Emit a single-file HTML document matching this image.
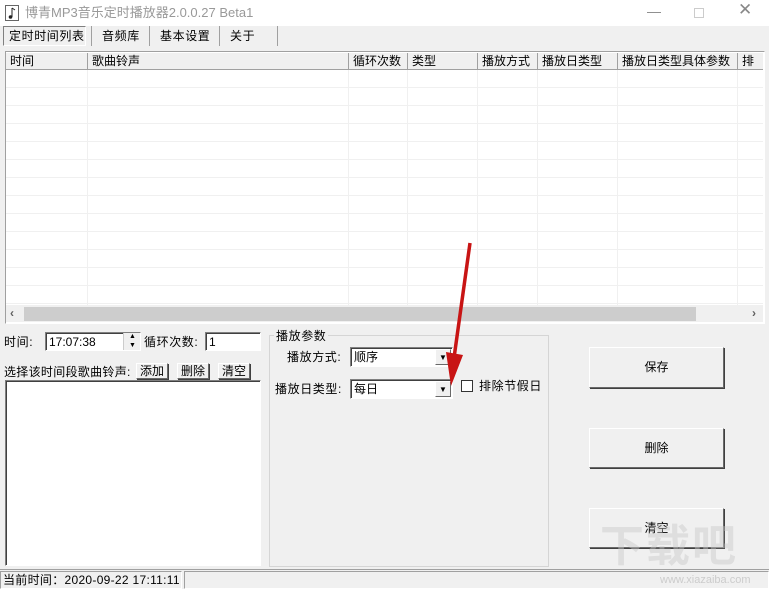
<!DOCTYPE html>
<html><head><meta charset="utf-8"><style>
*{margin:0;padding:0;box-sizing:border-box}
body{width:769px;height:589px;background:#f0f0f0;position:relative;overflow:hidden;font:12px "Liberation Sans","Noto Sans CJK SC",sans-serif;color:#000}
.a{position:absolute}
.t{position:absolute;white-space:nowrap;line-height:14px}
.btn{position:absolute;background:#f0f0f0;border:1px solid;border-color:#fff #696969 #696969 #fff;box-shadow:1px 1px 0 #404040;text-align:center}
.in{position:absolute;background:#fff;border:1px solid;border-color:#808080 #fff #fff #808080;box-shadow:inset 1px 1px 0 #404040}
.hd{position:absolute;top:53px;height:17px;border-right:1px solid #a0a0a0;border-bottom:1px solid #a0a0a0;background:#f0f0f0;padding-left:4px;line-height:16px}
.l{font-size:12px;letter-spacing:0.6px}
</style></head><body>
<div class="a" style="left:0;top:0;width:769px;height:26px;background:#fff"></div>
<svg class="a" style="left:5px;top:5px" width="14" height="16"><rect x="0.5" y="0.5" width="13" height="15" fill="#fff" stroke="#666"/><path d="M7 3v9M7 3l3 2" stroke="#222" fill="none"/><circle cx="5.5" cy="12" r="1.8" fill="#222"/></svg>
<div class="t" style="left:25px;top:6px;color:#999;font-size:13px">博青MP3音乐定时播放器2.0.0.27 Beta1</div>
<div class="t" style="left:647px;top:4px;color:#888;font-size:14px">—</div>
<div class="a" style="left:694px;top:8px;width:10px;height:10px;border:1px solid #ccc"></div>
<div class="t" style="left:738px;top:3px;color:#888;font-size:17px">✕</div>
<!-- tabs -->
<div class="a" style="left:3px;top:26px;width:83px;height:20px;border:1px solid;border-color:#808080 #fff #fff #808080"></div>
<div class="t l" style="left:9px;top:29px">定时时间列表</div>
<div class="a" style="left:91px;top:26px;width:1px;height:20px;background:#a0a0a0"></div>
<div class="t l" style="left:102px;top:29px">音频库</div>
<div class="a" style="left:149px;top:26px;width:1px;height:20px;background:#a0a0a0"></div>
<div class="t l" style="left:160px;top:29px">基本设置</div>
<div class="a" style="left:219px;top:26px;width:1px;height:20px;background:#a0a0a0"></div>
<div class="t l" style="left:230px;top:29px">关于</div>
<div class="a" style="left:277px;top:26px;width:1px;height:20px;background:#a0a0a0"></div>
<!-- list -->
<div class="a" style="left:5px;top:51px;width:760px;height:273px;border:1px solid;border-color:#a0a0a0 #fff #fff #a0a0a0;background:#fff"></div>
<div class="a" style="left:6px;top:70px;width:757px;height:235px;background:repeating-linear-gradient(to bottom,transparent 0 17px,#f0f0f0 17px 18px)"></div>
<div class="hd" style="left:6px;width:82px">时间</div>
<div class="hd" style="left:88px;width:261px">歌曲铃声</div>
<div class="hd" style="left:349px;width:59px">循环次数</div>
<div class="hd" style="left:408px;width:70px">类型</div>
<div class="hd" style="left:478px;width:60px">播放方式</div>
<div class="hd" style="left:538px;width:80px">播放日类型</div>
<div class="hd" style="left:618px;width:120px">播放日类型具体参数</div>
<div class="hd" style="left:738px;width:25px;overflow:hidden;border-right:none">排除</div>
<div class="a" style="left:87px;top:70px;width:1px;height:235px;background:#f0f0f0"></div>
<div class="a" style="left:348px;top:70px;width:1px;height:235px;background:#f0f0f0"></div>
<div class="a" style="left:407px;top:70px;width:1px;height:235px;background:#f0f0f0"></div>
<div class="a" style="left:477px;top:70px;width:1px;height:235px;background:#f0f0f0"></div>
<div class="a" style="left:537px;top:70px;width:1px;height:235px;background:#f0f0f0"></div>
<div class="a" style="left:617px;top:70px;width:1px;height:235px;background:#f0f0f0"></div>
<div class="a" style="left:737px;top:70px;width:1px;height:235px;background:#f0f0f0"></div>
<div class="a" style="left:6px;top:305px;width:757px;height:17px;background:#f0f0f0"></div>
<div class="a" style="left:24px;top:307px;width:672px;height:14px;background:#cdcdcd"></div>
<div class="t" style="left:10px;top:306px;color:#606060;font-weight:bold">‹</div>
<div class="t" style="left:752px;top:306px;color:#606060;font-weight:bold">›</div>
<!-- bottom left -->
<div class="t l" style="left:4px;top:335px">时间:</div>
<div class="in" style="left:45px;top:332px;width:96px;height:19px"></div>
<div class="t" style="left:49px;top:335px">17:07:38</div>
<div class="a" style="left:123px;top:333px;width:17px;height:17px;background:#f0f0f0;border-left:1px solid #ccc"><div class="t" style="left:5px;top:-3px;font-size:7px">▲</div><div class="t" style="left:5px;top:6px;font-size:7px">▼</div></div>
<div class="t l" style="left:144px;top:335px">循环次数:</div>
<div class="in" style="left:205px;top:332px;width:56px;height:19px"></div>
<div class="t" style="left:209px;top:335px">1</div>
<div class="t" style="left:4px;top:365px;font-size:12px;letter-spacing:0.3px">选择该时间段歌曲铃声:</div>
<div class="btn" style="left:136px;top:363px;width:32px;height:16px;line-height:14px">添加</div>
<div class="btn" style="left:177px;top:363px;width:32px;height:16px;line-height:14px">删除</div>
<div class="btn" style="left:218px;top:363px;width:32px;height:16px;line-height:14px">清空</div>
<div class="in" style="left:5px;top:380px;width:256px;height:186px"></div>
<!-- group -->
<div class="a" style="left:269px;top:335px;width:280px;height:232px;border:1px solid #d5d5d5"></div>
<div class="t l" style="left:274px;top:329px;background:#f0f0f0;padding:0 2px">播放参数</div>
<div class="t l" style="left:287px;top:350px">播放方式:</div>
<div class="in" style="left:350px;top:347px;width:103px;height:20px"></div>
<div class="t" style="left:354px;top:350px">顺序</div>
<div class="btn" style="left:435px;top:349px;width:16px;height:16px;box-shadow:none;font-size:8px;line-height:16px">▼</div>
<div class="t l" style="left:275px;top:382px">播放日类型:</div>
<div class="in" style="left:350px;top:379px;width:103px;height:20px"></div>
<div class="t" style="left:354px;top:382px">每日</div>
<div class="btn" style="left:435px;top:381px;width:16px;height:16px;box-shadow:none;font-size:8px;line-height:16px">▼</div>
<div class="a" style="left:461px;top:380px;width:12px;height:12px;border:1px solid #333;background:#fff"></div>
<div class="t l" style="left:479px;top:379px">排除节假日</div>
<!-- arrow -->
<svg class="a" style="left:440px;top:240px" width="40" height="150"><path d="M30 3 L14 118" stroke="#c81414" stroke-width="3.5" fill="none"/><path d="M6 112 L11 146 L23 115 Z" fill="#c81414"/></svg>
<!-- right buttons -->
<div class="btn" style="left:589px;top:347px;width:135px;height:41px;line-height:39px">保存</div>
<div class="btn" style="left:589px;top:428px;width:135px;height:40px;line-height:38px">删除</div>
<div class="btn" style="left:589px;top:508px;width:135px;height:40px;line-height:38px">清空</div>
<div class="t" style="left:600px;top:540px;color:rgba(200,200,200,0.45);font-size:44px;font-weight:bold;letter-spacing:2px">下载吧</div>
<div class="t" style="left:660px;top:573px;color:#ccc;font-size:11px">www.xiazaiba.com</div>
<!-- status -->
<div class="a" style="left:0;top:569px;width:769px;height:1px;background:#a0a0a0"></div>
<div class="a" style="left:0;top:571px;width:182px;height:18px;border:1px solid;border-color:#a0a0a0 #fff #fff #a0a0a0"></div>
<div class="t" style="left:3px;top:573px;font-size:12px;letter-spacing:0.3px">当前时间：2020-09-22 17:11:11</div>
<div class="a" style="left:184px;top:571px;width:585px;height:18px;border:1px solid;border-color:#a0a0a0 #fff #fff #a0a0a0"></div>
</body></html>
